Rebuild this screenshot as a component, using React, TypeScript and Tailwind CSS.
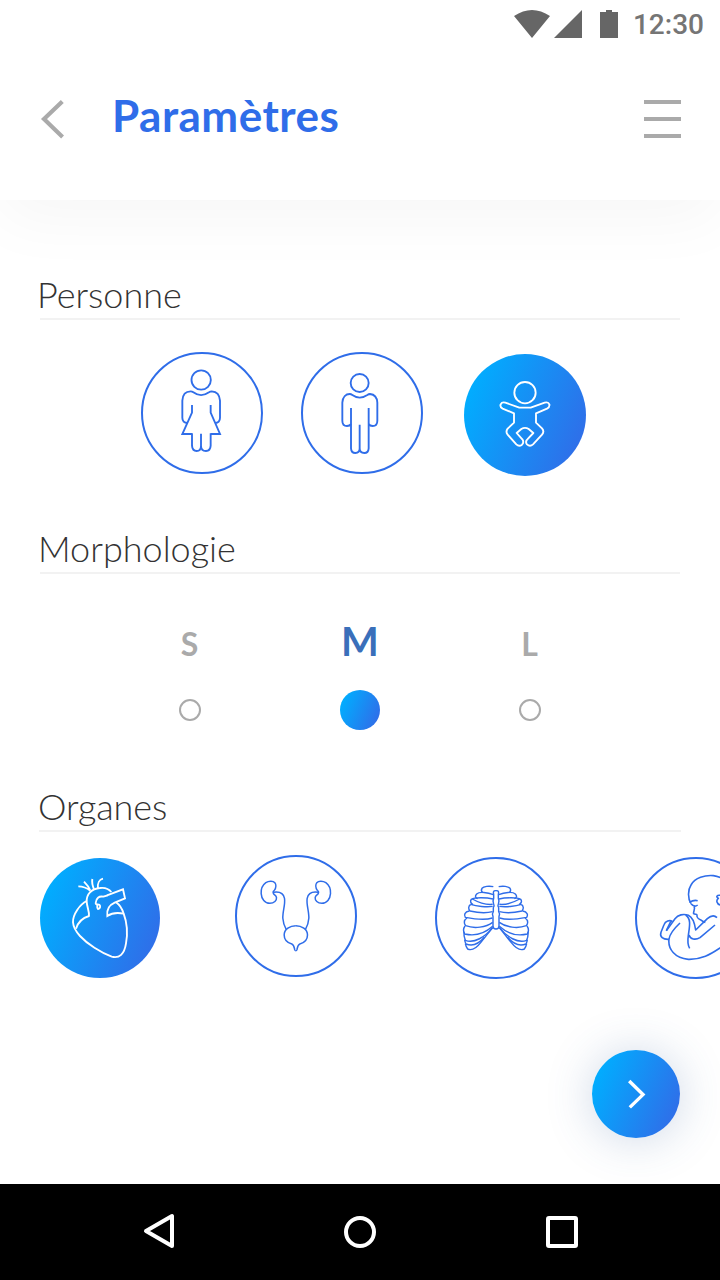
import type { ReactNode } from "react";

const GRADIENT =
  "bg-[linear-gradient(113deg,#00aeff_10%,#3369e7_96%)] text-white";
const OUTLINE = "border-2 border-[#2f6de9] bg-white text-[#2f6de9]";

function Icon({ box, size, children }: { box: string; size: string; children: ReactNode }) {
  return (
    <svg
      viewBox={box}
      className={`${size} shrink-0`}
      fill="none"
      stroke="currentColor"
      strokeWidth={5.6}
      strokeLinejoin="round"
      aria-hidden="true"
    >
      {children}
    </svg>
  );
}

function Round({
  active = false,
  className,
  label,
  children,
}: {
  active?: boolean;
  className: string;
  label: string;
  children: ReactNode;
}) {
  return (
    <button
      aria-label={label}
      aria-pressed={active}
      className={`flex shrink-0 items-center justify-center rounded-full ${active ? GRADIENT : OUTLINE} ${className}`}
    >
      {children}
    </button>
  );
}

function Woman() {
  return (
    <Icon box="33 36 366 366" size="size-[122px]">
      <circle cx="213.5" cy="120" r="29" />
      <path d="M173 249Q157 248 157 233V182C158 163 168 154 182 154Q186 154 190 157Q213 174 237 157Q241 154 245 154C259 155 269 163 270 182V233Q270 248 255 249" />
      <path strokeLinejoin="miter" d="M186 195V218L157 282H186M242 195V218L270 282H242" />
      <path d="M186 280V317Q187 333 200 333Q213 333 213 317V281M242 280V317Q241 333 228 333Q213 333 213 317" />
    </Icon>
  );
}

function Man() {
  return (
    <Icon box="33 36 366 366" size="size-[122px]">
      <circle cx="209" cy="129" r="27" />
      <path d="M183 252Q180 258 171 258Q157 258 157 242V188C158 170 168 162 179 162Q183 162 187 165Q209 181 232 165Q236 162 240 162C253 163 261 172 262 188V242Q262 258 248 258Q239 258 236 252" />
      <path d="M183 204V325Q184 339 196 339Q209 339 209 325V254M236 204V325Q235 339 223 339Q209 339 209 325" />
    </Icon>
  );
}

function Baby() {
  return (
    <Icon box="42 42 366 366" size="size-[122px]">
      <circle cx="225" cy="158" r="32" />
      <path d="M192 220L158 206Q149 201 152 193Q156 185 166 188L208 203H242L284 188Q295 185 298 193Q300 201 291 206L258 220V248L276 265Q284 274 276 284L249 313Q240 321 231 313Q225 305 232 298L250 279L236 267Q225 260 214 267L200 279L217 298Q223 307 216 314Q207 321 199 313L173 284Q166 275 173 266L192 248Z" />
    </Icon>
  );
}

function Heart() {
  return (
    <Icon box="30 39 360 360" size="size-[120px]">
      <path d="M170 168C150 178 128 208 129 232C130 250 138 260 150 273C172 297 212 323 245 335C268 341 283 328 288 295C294 262 290 230 281 206C276 190 270 180 258 172" />
      <path d="M244 141C236 131 225 127 210 129C184 131 169 148 170 170C171 186 178 198 177 213C160 218 144 232 138 251" />
      <path strokeLinejoin="miter" d="M231 151L279 133L285 160L254 173C236 181 229 192 232 213C245 204 262 202 281 206" />
      <path d="M233 151L220 155C207 152 198 160 197 174C197 181 204 176 208 179C213 184 210 191 204 192C199 188 203 182 202 177" />
      <path d="M145 124C159 124 171 129 181 137M162 110C169 117 177 126 181 137M187 102C185 112 188 123 192 133M219 101C208 103 202 115 204 130" />
    </Icon>
  );
}

function UrinaryHalf() {
  return (
    <>
      <path d="M148 137C153 130 155 120 150 113C145 107 131 108 123 113C112 121 108 132 109 146C110 162 120 175 135 175C148 175 156 166 155 158C154 151 148 150 146 146Q143 140 148 137" />
      <path d="M146 142C166 139 176 145 179 160C182 178 173 200 174 220C175 236 179 244 184 253" />
      <path d="M213 242C196 242 178 252 178 270C178 287 190 294 201 297C208 300 208 308 210 315Q211 317 213 317" />
    </>
  );
}

function Urinary() {
  return (
    <Icon box="30.5 30 366 366" size="size-[122px]">
      <g strokeWidth={4.5}>
        <UrinaryHalf />
        <g transform="matrix(-1 0 0 1 426 0)">
          <UrinaryHalf />
        </g>
      </g>
    </Icon>
  );
}

function RibsHalf() {
  return (
    <>
      <path d="M205 125C192 122 176 124 171 130C167 136 170 140 173 143" />
      <path d="M205 149C188 142 163 139 155 147C149 153 151 159 158 161" />
      <path d="M204 162C186 158 150 156 139 163C134 169 138 176 144 179" />
      <path d="M142 162C158 171 184 180 203 178" />
      <path d="M137 178C129 184 130 192 135 198C152 202 184 205 203 200" />
      <path d="M137 178C155 184 185 187 203 184" />
      <path d="M133 198C119 201 116 209 121 217C148 222 180 226 202 219" />
      <path d="M126 219C115 226 117 236 122 242C148 252 183 247 203 232" />
      <path d="M120 243C115 250 115 260 119 267C150 274 181 264 203 244" />
      <path d="M117 260C116 270 118 279 121 286C148 296 180 276 203 248" />
      <path d="M119 284Q120 292 123 297C144 306 162 296 178 277" />
      <path d="M121 296Q123 306 128 312C144 319 157 306 167 293L203 248" />
      <path d="M213 137C205 136 204 141 206 148V160Q202 168 206 177Q209 183 205 188V200Q200 207 204 214V243Q204 252 213 252" />
    </>
  );
}

function Ribs() {
  return (
    <Icon box="30 36 366 366" size="size-[122px]">
      <g strokeWidth={4.3}>
        <RibsHalf />
        <g transform="matrix(-1 0 0 1 426 0)">
          <RibsHalf />
        </g>
      </g>
    </Icon>
  );
}

function Fetus() {
  return (
    <Icon box="45 36 366 366" size="size-[122px]">
      <g strokeWidth={4.8}>
        <path d="M213 176C203 160 203 135 213 120C225 98 255 90 280 92C320 97 345 130 340 165C340 230 330 290 300 309C270 329 245 344 205 343C165 340 143 312 147 282C149 267 163 250 180 234" />
        <path d="M208 172Q221 164 233 167M213 176Q223 188 233 180M222 184C227 191 219 200 221 206C225 210 231 205 231 211C230 216 235 222 241 224C247 229 249 231 256 232" />
        <path d="M302 151C290 149 287 156 295 160C288 165 289 178 302 180" />
        <path d="M291 218C282 209 271 213 262 221L227 255C224 235 217 216 205 211C190 205 174 210 165 221L139 257" />
        <path d="M197 210C215 222 208 247 205 271C202 290 203 300 209 310M207 270C211 283 226 286 240 278L285 240" />
        <path d="M157 229C149 224 136 228 132 239L123 262C118 276 129 284 147 283M152 230L139 257" />
      </g>
    </Icon>
  );
}

function Heading({ className = "mx-10", children }: { className?: string; children: ReactNode }) {
  return (
    <h2
      className={`h-[44px] border-b-2 border-[#f2f2f2] text-[36px] leading-[36px] font-light text-[#333] ${className}`}
    >
      {children}
    </h2>
  );
}

function StatusBar() {
  return (
    <div className="flex h-12 items-start justify-end pr-4 text-[#666]">
      <svg viewBox="0 0 106 29" className="mt-[10px] h-[29px] w-[106px]" fill="currentColor" aria-hidden="true">
        <path d="M0 6Q18-6 36 6L18 28ZM40 28L68 0V28ZM86 2H92V0H98V2H104V28H86Z" />
      </svg>
      <span className="mt-[9px] ml-[13px] font-[Roboto,sans-serif] text-[28px] leading-[32px] font-medium text-[#757575]">
        12:30
      </span>
    </div>
  );
}

export default function App() {
  return (
    <div className="flex h-[1280px] w-[720px] flex-col overflow-hidden bg-white font-[Lato,sans-serif]">
      <header className="h-[200px] bg-white shadow-[0_18px_66px_rgba(0,0,0,0.04)]">
        <StatusBar />
        <div className="flex items-start pt-[45px] pr-[39px] pl-10">
          <svg viewBox="0 0 24 40" className="mt-[6px] h-10 w-6" fill="none" stroke="#aaa" strokeWidth="4.2" aria-hidden="true">
            <path d="M22.3 2.5L4 20L22.6 38" />
          </svg>
          <h1 className="ml-[48px] text-[44px] leading-[44px] font-bold tracking-[0.5px] text-[#2f6de9]">Paramètres</h1>
          <div className="mt-[7px] ml-auto flex w-[37px] flex-col gap-[13px]">
            <span className="h-1 bg-[#aaa]" />
            <span className="h-1 bg-[#aaa]" />
            <span className="h-1 bg-[#aaa]" />
          </div>
        </div>
      </header>

      <main className="flex h-[984px] flex-col">
        <Heading className="mx-10 mt-[76px]"><span className="-ml-[3px]">Personne</span></Heading>
        <div className="mt-8 ml-[141px] flex h-[124px] items-start">
          <Round label="Femme" className="size-[122px]"><Woman /></Round>
          <Round label="Homme" className="ml-[38px] size-[122px]"><Man /></Round>
          <Round active label="Bébé" className="mt-[2px] ml-[41px] size-[122px]"><Baby /></Round>
        </div>

        <Heading className="mx-10 mt-[54px]"><span className="-ml-[2px]">Morphologie</span></Heading>
        <div className="mx-[105px] mt-12 grid grid-cols-3 justify-items-center">
          {["S", "M", "L"].map((size) => (
            <button key={size} className="flex w-20 flex-col items-center">
              <span
                className={
                  size === "M"
                    ? "-mt-px h-[69px] text-[40px] leading-[40px] font-bold text-[#3a6fba]"
                    : "h-[68px] pt-[6px] pr-px text-[32px] leading-[32px] font-bold text-[#aaa]"
                }
              >
                {size}
              </span>
              <span
                className={
                  size === "M"
                    ? `size-10 rounded-full ${GRADIENT}`
                    : "mt-[9px] size-[22px] rounded-full border-2 border-[#aaa] bg-white"
                }
              />
            </button>
          ))}
        </div>

        <Heading className="mr-[39px] ml-[39px] mt-[58px] tracking-[-0.1px]"><span className="-ml-px">Organes</span></Heading>
        <div className="mt-[23px] flex h-[124px] items-start overflow-hidden pl-10">
          <Round active label="Cœur" className="mt-[3px] size-[120px]"><Heart /></Round>
          <Round label="Système urinaire" className="ml-[75px] size-[122px]"><Urinary /></Round>
          <Round label="Thorax" className="mt-[2px] ml-[78px] size-[122px]"><Ribs /></Round>
          <Round label="Fœtus" className="mt-[2px] ml-[78px] size-[122px]"><Fetus /></Round>
        </div>

        <button
          aria-label="Suivant"
          className={`mt-[71px] mr-10 flex size-[88px] items-center justify-center self-end rounded-full shadow-[0_2px_46px_rgba(58,100,160,0.25)] ${GRADIENT}`}
        >
          <svg viewBox="0 0 88 88" className="size-[88px]" fill="none" stroke="currentColor" strokeWidth="3.4" aria-hidden="true">
            <path d="M37.2 31L51 44.6L37.8 57.4" />
          </svg>
        </button>
      </main>

      <nav className="flex h-24 shrink-0 items-start bg-black pt-[29px] pl-[143px] text-white">
        <svg viewBox="0 0 32 36" className="h-9 w-8" fill="none" stroke="currentColor" strokeWidth="4" strokeLinejoin="round" aria-hidden="true">
          <path d="M3 18L29 3V33Z" />
        </svg>
        <span className="mt-[3px] ml-[169px] size-8 rounded-full border-4 border-white" />
        <span className="mt-[3px] ml-[170px] size-8 rounded-[3px] border-4 border-white" />
      </nav>
    </div>
  );
}
